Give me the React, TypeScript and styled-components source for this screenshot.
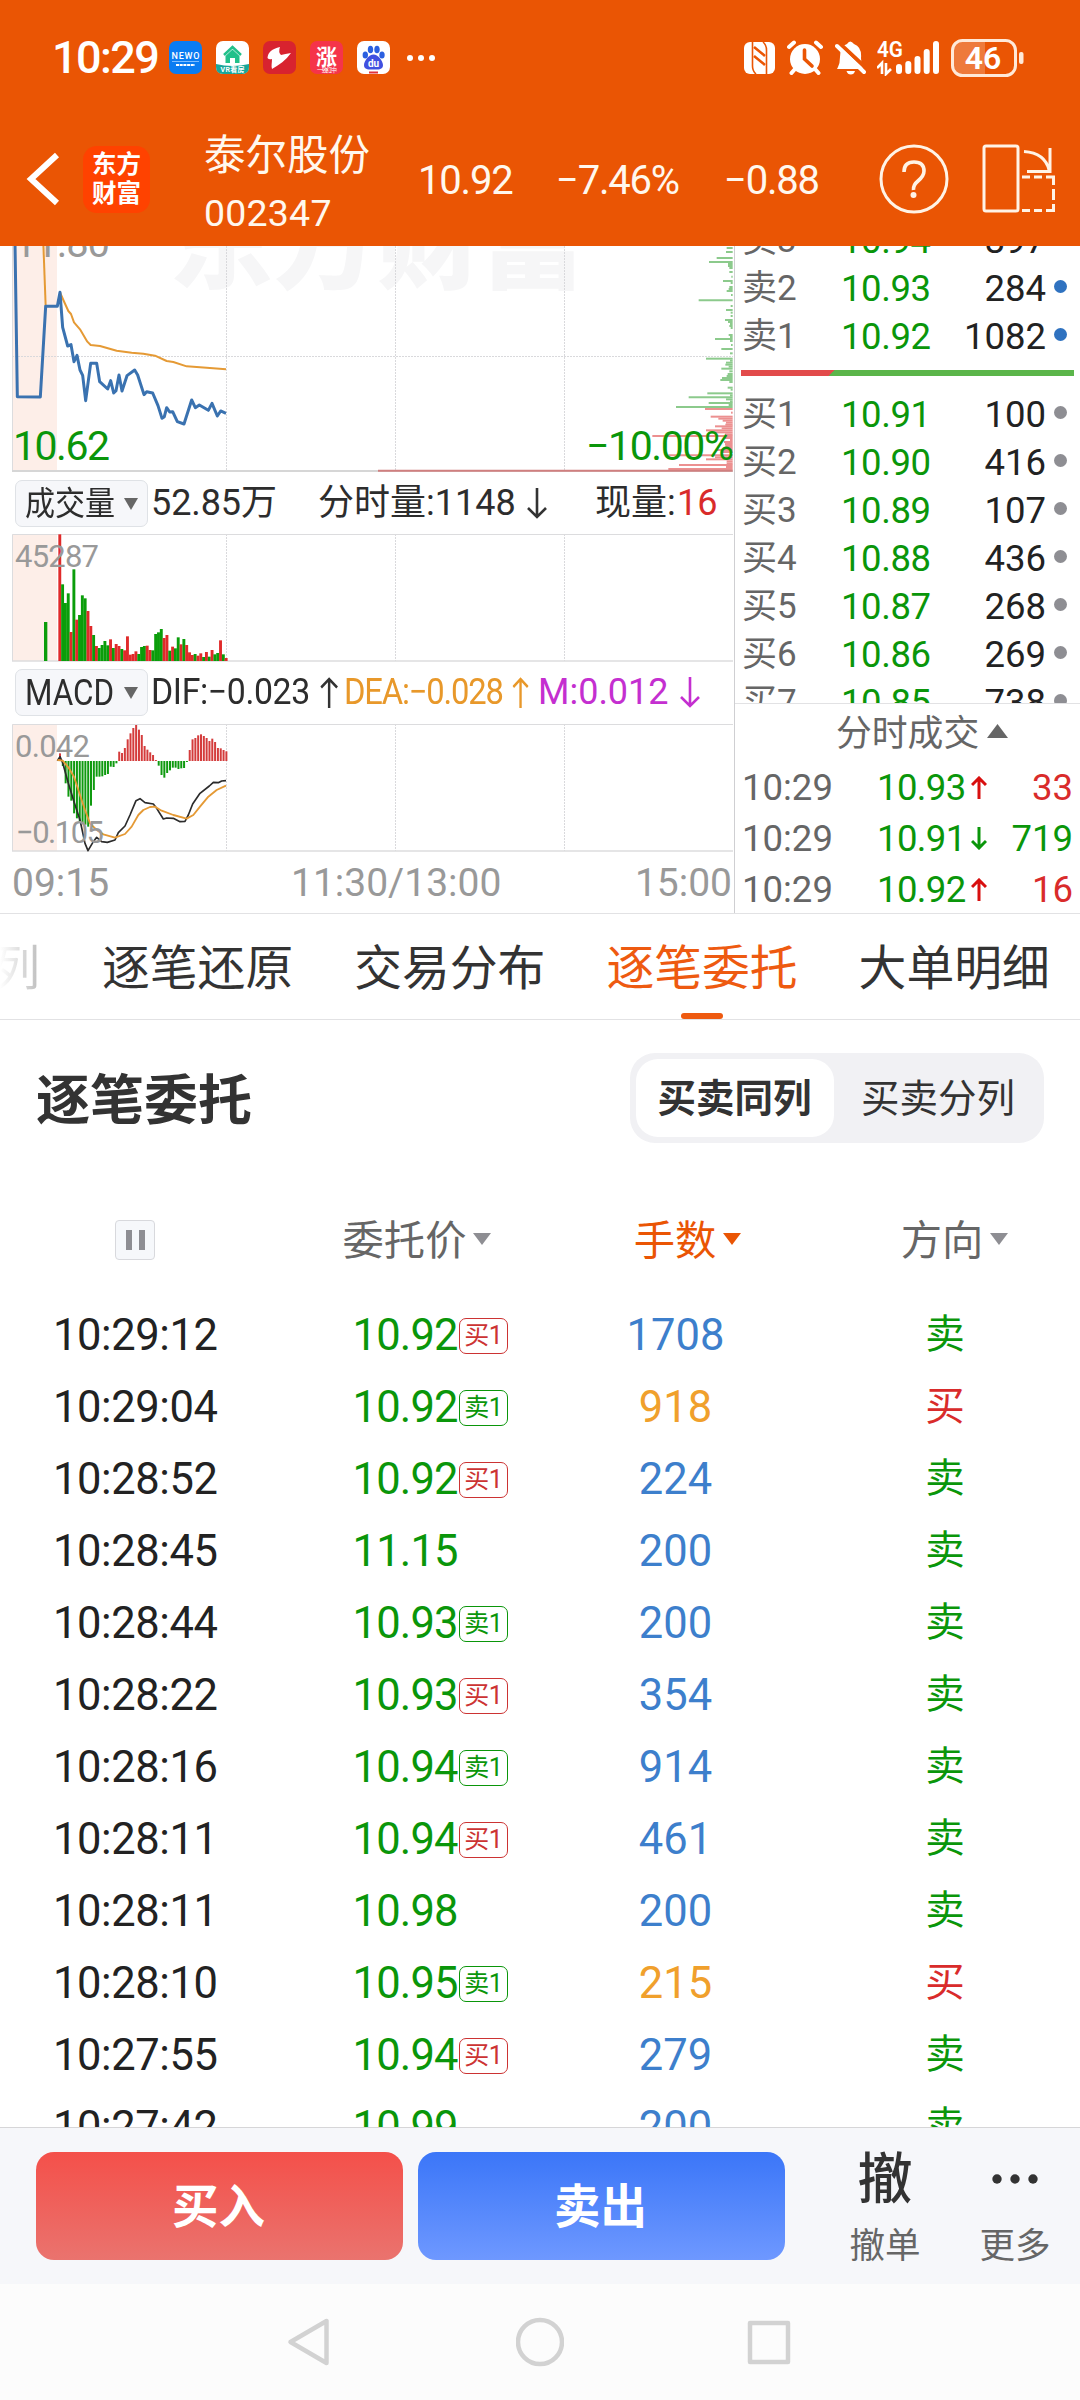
import React from "react";
import styled, { createGlobalStyle } from "styled-components";

const GREEN = "#0a960a";
const RED = "#d92b2b";
const BLUE = "#3d7fcc";
const AMBER = "#f0a02c";
const ORANGE = "#ea5504";

const FONT = `Roboto, "Noto Sans CJK SC", sans-serif`;

const GlobalStyle = createGlobalStyle`
  * { box-sizing: border-box; }
  body { margin: 0; background: #fff; font-family: ${FONT}; }
  svg { display: block; flex: none; }
`;

const Screen = styled.div`
  width: 1080px;
  height: 2400px;
  display: flex;
  flex-direction: column;
  overflow: hidden;
  background: #fff;
  color: #262626;
  line-height: 1.2;
  white-space: nowrap;
`;

/* ---------- top area ---------- */

const Top = styled.header`
  height: 246px;
  flex: none;
  background: ${ORANGE};
  color: #fff8ee;
`;

const StatusBar = styled.div`
  height: 115px;
  padding: 0 55px 0 52px;
  display: flex;
  align-items: center;
`;

const Clock = styled.span`
  width: 117px;
  font-size: 45px;
  line-height: 50px;
  font-weight: 500;
  letter-spacing: -1.6px;
  color: #fff;
`;

const AppIcons = styled.div`
  display: flex;
  gap: 14px;
  align-items: center;
`;

const SystemIcons = styled.div`
  margin-left: auto;
  display: flex;
  align-items: center;
`;

const TitleBar = styled.div`
  height: 128px;
  padding: 0 20px 0 26px;
  display: flex;
  align-items: center;
`;

const Logo = styled.div`
  width: 67px;
  height: 67px;
  flex: none;
  margin-left: 22px;
  border-radius: 14px;
  background: #ff4200;
  color: #fff;
  display: flex;
  flex-direction: column;
  align-items: center;
  justify-content: center;
  font: 700 24.5px/29px ${FONT};
`;

const StockName = styled.div`
  width: 214px;
  flex: none;
  margin: 11px 0 0 54px;
  display: flex;
  flex-direction: column;
`;

const Name = styled.span`
  font-size: 41.5px;
  line-height: 56px;
`;

const Code = styled.span`
  font-size: 37.5px;
  line-height: 58px;
  letter-spacing: 0.2px;
`;

const Quote = styled.span<{ $w: number }>`
  width: ${(p) => p.$w}px;
  flex: none;
  padding-top: 3px;
  font-size: 40px;
  line-height: 56px;
  letter-spacing: -1.2px;
`;

/* ---------- market panel ---------- */

const Market = styled.section`
  height: 668px;
  flex: none;
  display: flex;
  border-bottom: 1px solid #e2e2e4;
`;

const Charts = styled.div`
  width: 734px;
  flex: none;
  display: flex;
  flex-direction: column;
`;

const IndicatorRow = styled.div`
  height: 59px;
  flex: none;
  padding-left: 15px;
  display: flex;
  align-items: center;
  font-size: 36px;
  color: #2d2d2d;
`;

const Picker = styled.div`
  width: 133px;
  height: 47px;
  margin-right: 3px;
  padding: 0 9px 0 9px;
  border: 1px solid #dfe2e6;
  border-radius: 7px;
  background: #f6f7fa;
  display: flex;
  align-items: center;
  justify-content: space-between;
`;

const PickerText = styled.span<{ $size: number; $squeeze: number }>`
  width: 88px;
  font-size: ${(p) => p.$size}px;
  line-height: 44px;
  transform: scaleX(${(p) => p.$squeeze});
  transform-origin: left;
`;

const Field = styled.span<{ $w: number; $color?: string; $track?: number; $squeeze?: number }>`
  width: ${(p) => p.$w}px;
  flex: none;
  display: flex;
  align-items: center;
  gap: 11px;
  color: ${(p) => p.$color ?? "inherit"};
  letter-spacing: ${(p) => p.$track ?? 0}px;
  transform: scaleX(${(p) => p.$squeeze ?? 1});
  transform-origin: left;
`;

const AxisRow = styled.div`
  height: 59px;
  padding: 0 2px 0 12px;
  display: flex;
  align-items: center;
  font-size: 39px;
  color: #999;
`;

const AxisStart = styled.span`
  width: 279px;
`;

const AxisEnd = styled.span`
  margin-left: auto;
`;

const Side = styled.div`
  flex: 1;
  border-left: 1px solid #cfcfd2;
  display: flex;
  flex-direction: column;
`;

const Book = styled.div`
  height: 458px;
  flex: none;
  overflow: hidden;
  border-bottom: 1px solid #e2e2e4;
`;

const BookList = styled.div`
  margin-top: -30px;
`;

const BookRow = styled.div`
  height: 48px;
  padding: 0 13px 0 7px;
  display: flex;
  align-items: center;
  font-size: 36.5px;
  line-height: 49px;
`;

const Level = styled.span`
  width: 99px;
  color: #666;
  font-size: 35px;
`;

const LevelPrice = styled.span`
  width: 104px;
  color: ${GREEN};
  letter-spacing: -0.4px;
`;

const LevelQty = styled.span`
  flex: 1;
  text-align: right;
  color: #222;
`;

const Dot = styled.i<{ $c: string }>`
  width: 13px;
  height: 13px;
  margin: -4px 0 0 8px;
  border-radius: 50%;
  background: ${(p) => p.$c};
`;

const Balance = styled.div`
  height: 6px;
  margin: 10px 6px 14px 6px;
  background: linear-gradient(135deg, #e24b4b 0 66px, #5bb54a 66.5px);
`;

const TickTitle = styled.div`
  height: 58px;
  flex: none;
  padding: 2px 0 0 101px;
  display: flex;
  align-items: center;
  gap: 8px;
  font-size: 35.8px;
  color: #666;
`;

const TickTriangle = styled.span`
  margin-top: -6px;
`;

const TickRow = styled.div`
  height: 51px;
  flex: none;
  padding: 0 7px 0 7px;
  display: flex;
  align-items: center;
  font-size: 36.5px;
`;

const TickTime = styled.span`
  width: 135px;
  color: #666;
`;

const TickPrice = styled.span`
  width: 94px;
  color: ${GREEN};
  letter-spacing: -0.6px;
`;

const TickQty = styled.span<{ $c: string }>`
  flex: 1;
  text-align: right;
  color: ${(p) => p.$c};
`;

/* ---------- tabs ---------- */

const Tabs = styled.nav`
  height: 106px;
  flex: none;
  display: flex;
  align-items: stretch;
  gap: 61px;
  border-bottom: 1px solid #e2e2e4;
  overflow: hidden;
`;

const Tab = styled.span<{ $active?: boolean }>`
  flex: none;
  display: flex;
  flex-direction: column;
  align-items: center;
  justify-content: space-between;
  padding-top: 21px;
  font-size: 47.8px;
  line-height: 68px;
  color: ${(p) => (p.$active ? "#ee5a10" : "#333")};
`;

const FadedTab = styled(Tab)`
  width: 41px;
  padding-right: 1px;
  align-items: flex-end;
  background: linear-gradient(90deg, #fff 0, #bbb 100%);
  background-clip: text;
  -webkit-background-clip: text;
  color: transparent;
`;

const Underline = styled.i`
  width: 42px;
  height: 6px;
  border-radius: 3px;
  background: #ee5a10;
`;

/* ---------- order list ---------- */

const Orders = styled.section`
  height: 1107px;
  flex: none;
  overflow: hidden;
`;

const OrdersHead = styled.div`
  height: 156px;
  padding: 0 36px;
  display: flex;
  align-items: center;
  justify-content: space-between;
`;

const Heading = styled.h2`
  margin: 8px 0 0;
  font-size: 54px;
  line-height: 70px;
  font-weight: 700;
  color: #333;
`;

const Segment = styled.div`
  width: 414px;
  height: 90px;
  margin-top: -1px;
  padding: 6px;
  border-radius: 25px;
  background: #f1f1f4;
  display: flex;
`;

const SegmentItem = styled.span<{ $on?: boolean }>`
  width: ${(p) => (p.$on ? 198 : 204)}px;
  padding: 3px ${(p) => (p.$on ? 1 : 0)}px 0 ${(p) => (p.$on ? 0 : 4)}px;
  border-radius: 22px;
  background: ${(p) => (p.$on ? "#fff" : "transparent")};
  font-size: 38.5px;
  font-weight: ${(p) => (p.$on ? 700 : 400)};
  color: #333;
  display: flex;
  align-items: center;
  justify-content: center;
`;

const Grid = styled.div`
  display: grid;
  grid-template-columns: 270px 271px 270px 269px;
  align-items: center;
`;

const HeadGrid = styled(Grid)`
  height: 124px;
  padding-top: 3px;
  font-size: 41.3px;
  color: #666;
`;

const RowGrid = styled(Grid)`
  height: 72px;
  font-size: 43.5px;
`;

const HeadCell = styled.span<{ $c?: string; $shift?: number }>`
  display: flex;
  align-items: center;
  justify-content: center;
  gap: 7px;
  padding-left: ${(p) => p.$shift ?? 0}px;
  color: ${(p) => p.$c ?? "inherit"};
`;

const HeadText = styled.span`
  padding-top: 4px;
`;

const Pause = styled.div`
  width: 40px;
  height: 40px;
  border: 1px solid #d8d9dd;
  border-radius: 4px;
  background: #f6f8fb;
  display: flex;
  gap: 7px;
  align-items: center;
  justify-content: center;
`;

const PauseBar = styled.i`
  width: 6px;
  height: 20px;
  background: #8e8e93;
`;

const Time = styled.span`
  padding-left: 53px;
  color: #222;
  letter-spacing: -0.4px;
`;

const Price = styled.span`
  padding-left: 82.5px;
  display: flex;
  align-items: center;
  color: ${GREEN};
  letter-spacing: -0.8px;
`;

const Tag = styled.span<{ $buy: boolean }>`
  width: 49px;
  height: 36px;
  margin: 0 0 0 1px;
  border: 1px solid currentColor;
  border-radius: 7px;
  display: flex;
  align-items: center;
  justify-content: center;
  font-size: 25px;
  line-height: 34px;
  letter-spacing: -0.5px;
  color: ${(p) => (p.$buy ? "#cc3333" : "#0a960a")};
`;

const Qty = styled.span<{ $big: boolean }>`
  padding-right: 1px;
  text-align: center;
  color: ${(p) => (p.$big ? AMBER : BLUE)};
`;

const Direction = styled.span<{ $buy: boolean }>`
  margin-top: -3px;
  padding-right: 1px;
  text-align: center;
  font-size: 39.5px;
  color: ${(p) => (p.$buy ? RED : GREEN)};
`;

/* ---------- bottom ---------- */

const TradeBar = styled.footer`
  height: 157px;
  flex: none;
  padding: 24px 0 0 36px;
  border-top: 1px solid #d6d6d8;
  background: #f6f7fa;
  display: flex;
  align-items: flex-start;
`;

const TradeButton = styled.button<{ $from: string; $to: string }>`
  width: 367px;
  height: 108px;
  margin: 0 15px 0 0;
  padding: 2px 2px 0 0;
  border: 0;
  border-radius: 18px;
  background: linear-gradient(${(p) => p.$from}, ${(p) => p.$to});
  color: #fff;
  font: 700 46.5px/106px ${FONT};
`;

const Action = styled.div<{ $w: number }>`
  width: ${(p) => p.$w}px;
  display: flex;
  flex-direction: column;
  align-items: center;
`;

const ActionIcon = styled.span`
  height: 62px;
  margin-top: -4px;
  display: flex;
  align-items: center;
  font-size: 55px;
  font-weight: 500;
  line-height: 62px;
  color: #333;
`;

const ActionLabel = styled.span`
  margin-top: 12px;
  font-size: 35.5px;
  line-height: 48px;
  color: #666;
`;

const NavBar = styled.div`
  height: 116px;
  flex: none;
  background: #fcfcfc;
  display: flex;
  align-items: center;
  justify-content: center;
  gap: 183px;
`;

/* ---------- drawings ---------- */

const Caret = ({ w, h, c, up }: { w: number; h: number; c: string; up?: boolean }) => (
  <svg width={w} height={h} viewBox="0 0 10 10" preserveAspectRatio="none">
    <path d={up ? "M0 10H10L5 0Z" : "M0 0H10L5 10Z"} fill={c} />
  </svg>
);

const Arrow = ({ up, c, w = 20, h = 31, s = 2.6 }: { up?: boolean; c: string; w?: number; h?: number; s?: number }) => (
  <svg width={w} height={h} fill="none" stroke={c} strokeWidth={s}>
    {up ? (
      <path d={`M${w / 2} ${h}V2M1 ${w / 2 + 1}L${w / 2} 2L${w - 1} ${w / 2 + 1}`} />
    ) : (
      <path d={`M${w / 2} 0V${h - 2}M1 ${h - w / 2 - 1}L${w / 2} ${h - 2}L${w - 1} ${h - w / 2 - 1}`} />
    )}
  </svg>
);

const StatusApps = () => (
  <AppIcons>
    <svg width="33" height="33">
      <rect width="33" height="33" rx="7" fill="#0a7cf2" />
      <text x="16.500" y="18" fontSize="9" fontWeight="500" fill="#fff" textAnchor="middle" textLength="28">NEWO</text>
      <path d="M3 20.500H30" stroke="#7dbcff" strokeWidth="1" />
      <path d="M7 24H26" stroke="#fff" strokeWidth="2.200" strokeDasharray="3 .7" />
    </svg>
    <svg width="33" height="33">
      <rect width="33" height="33" rx="7" fill="#fff" />
      <path d="M0 23Q16 27 33 23V26Q33 33 26 33H7Q0 33 0 26Z" fill="#19a79a" />
      <path d="M8 14L16.500 6L25 14" fill="none" stroke="#22c08a" strokeWidth="2.500" />
      <path d="M9.500 15L16.500 8.500L23.500 15V22H19V17H14V22H9.500Z" fill="#22c08a" />
      <text x="16.500" y="31" fontSize="7" fontWeight="700" fill="#fff" textAnchor="middle" textLength="24">VR看房</text>
    </svg>
    <svg width="33" height="33">
      <rect width="33" height="33" rx="7" fill="#d8232f" />
      <path d="M17 6C9 8 5 11 4.500 17Q6 19 9 18C9 22 8 25 9 28C16 24 23 19 28 12Q22 13 18 14Q15 11 17 6Z" fill="#fff" />
    </svg>
    <svg width="33" height="33">
      <rect width="33" height="33" rx="7" fill="#f5344a" />
      <text x="16.500" y="23" fontSize="21" fontWeight="700" fill="#fff" textAnchor="middle">涨</text>
      <text x="17" y="31" fontSize="6" fill="#fff" textAnchor="middle" textLength="20">一致红中</text>
    </svg>
    <svg width="33" height="33">
      <rect width="33" height="33" rx="7" fill="#fff" />
      <g fill="#2a5fe0">
        <ellipse cx="8.300" cy="14" rx="2.700" ry="3.500" />
        <ellipse cx="13.500" cy="8.500" rx="2.700" ry="3.800" />
        <ellipse cx="20" cy="8.500" rx="2.700" ry="3.800" />
        <ellipse cx="25" cy="14" rx="2.700" ry="3.500" />
        <path d="M16.500 13.500C21 13.500 26 20 26 24C26 29 21 28.500 16.500 28.500S7 29 7 24C7 20 12 13.500 16.500 13.500Z" fill="#4050e0" />
      </g>
      <text x="16.500" y="26" fontSize="10" fontWeight="700" fill="#fff" textAnchor="middle">du</text>
      <path d="M12 31.500H21" stroke="#e0323c" strokeWidth="2" />
    </svg>
    <svg width="34" height="8" fill="#fff">
      <circle cx="6" cy="4" r="3" />
      <circle cx="17" cy="4" r="3" />
      <circle cx="28" cy="4" r="3" />
    </svg>
  </AppIcons>
);

const StatusIcon = styled.svg<{ $gap: number }>`
  margin-left: ${(p) => p.$gap}px;
`;

const StatusIcons = () => (
  <SystemIcons>
    <StatusIcon $gap={0} width="31" height="33" viewBox="0 0 31 33">
      <rect y="1" width="31" height="32" rx="6" fill="#fff" />
      <path d="M8.500 1V25Q8.500 30 12 33M22.500 33V9Q22.500 4 19 1" fill="none" stroke={ORANGE} strokeWidth="1.600" />
      <path d="M10 6L21 15M10 15L21 24" stroke={ORANGE} strokeWidth="2.600" />
    </StatusIcon>
    <StatusIcon $gap={12} width="36" height="35" viewBox="0 0 36 35">
      <circle cx="18" cy="19" r="15" fill="#fff" />
      <path d="M2 7L7 2.500M34 7L29 2.500M8 29L4.500 33M28 29L31.500 33" stroke="#fff" strokeWidth="4" strokeLinecap="round" />
      <path d="M17.500 10V19L25 26" fill="none" stroke={ORANGE} strokeWidth="3.600" strokeLinecap="round" />
    </StatusIcon>
    <StatusIcon $gap={12} width="31" height="35" viewBox="0 0 31 35">
      <path d="M3 27Q5 23 5 17Q5 6 12 4Q15 -1 19 4Q27 7 26 18Q26 24 28 29H2Z" fill="#fff" />
      <path d="M11.500 31H20Q19 34.500 15.800 34.500T11.500 31Z" fill="#fff" />
      <path d="M3 2L31 28" stroke={ORANGE} strokeWidth="4" />
      <path d="M2 6L29 32" stroke="#fff" strokeWidth="4" strokeLinecap="round" />
    </StatusIcon>
    <StatusIcon $gap={11} width="64" height="36" viewBox="0 0 64 36">
      <text x="0" y="17" fontSize="22" fontWeight="600" fill="#fff" textLength="26" lengthAdjust="spacingAndGlyphs">4G</text>
      <path d="M0 28L5 23V34M9 23V34L14 29" fill="none" stroke="#fff" strokeWidth="2.600" />
      <g stroke="#fff" strokeWidth="6" strokeLinecap="round">
        <path d="M22 27V31M31.300 24V31M40.500 19V31M49.700 12V31M59 4V31" />
      </g>
    </StatusIcon>
    <StatusIcon $gap={10} width="74" height="38" viewBox="0 0 74 38">
      <path d="M12 1.500H34V36.500H12Q1.500 36.500 1.500 26V12Q1.500 1.500 12 1.500Z" fill="#fff" opacity=".22" />
      <rect x="1.500" y="1.500" width="63" height="35" rx="10" fill="none" stroke="#ffe9d8" strokeWidth="3" />
      <rect x="68" y="13" width="4.500" height="12" rx="2" fill="#ffe9d8" />
      <text x="32" y="30" fontSize="32" fontWeight="600" fill="#fff" textAnchor="middle">46</text>
    </StatusIcon>
  </SystemIcons>
);

const BackIcon = () => (
  <svg width="35" height="56" fill="none" stroke="#fff" strokeWidth="6">
    <path d="M31 4L5 28L31 52" />
  </svg>
);

const HelpIcon = () => (
  <svg width="70" height="70" fill="none" stroke="#fff3e6" strokeWidth="3">
    <circle cx="35" cy="35" r="33" />
    <path d="M25 28Q25 18 35 18T45 27Q45 32 39 37Q34 41 34.500 46" strokeWidth="3.600" />
    <circle cx="34.500" cy="51" r="3" fill="#fff3e6" stroke="none" />
  </svg>
);

const RotateSvg = styled.svg`
  margin-left: 32px;
`;

const RotateIcon = () => (
  <RotateSvg width="76" height="70" fill="none" stroke="#fff3e6" strokeWidth="3">
    <rect x="3" y="2" width="34" height="65" rx="2" />
    <path d="M43 7.500Q64 9 68 26M69 4V27.500H46" />
    <path d="M41 33H49M53 33H61M65 33H72.500V41M72.500 45V56M72.500 60V66.500H65M61 66.500H53M49 66.500H41" />
  </RotateSvg>
);

const AVG = "180,157 190,180 205,213 213,222 222,247 240,268 262,305 272,315 300,318 350,332 395,338 430,341 465,347 500,363 520,366 560,379 620,383 678,388";
const PRICE =
  "45,10 52,470 121,471 137,199 172,199 180,157 188,262 203,318 213,314 222,365 231,346 240,390 248,406 257,482 272,370 290,370 299,425 323,447 332,422 341,459 348,452 357,405 366,453 381,407 404,390 413,405 432,464 440,455 458,459 474,497 486,535 493,530 500,503 509,516 518,515 532,545 552,552 575,480 586,503 598,495 625,511 636,490 652,528 662,513 678,520";

// [y, left edge] of the price distribution bars
const SELL_DEPTH = [
  [24, 1100], [36, 1098], [54, 1070], [66, 1047], [72, 1104], [78, 1104], [84, 1108], [96, 1108], [110, 1114], [123, 1089], [129, 1112],
  [141, 1108], [147, 1106], [153, 1100], [165, 1113], [181, 1016], [198, 1112], [210, 1098], [218, 1112], [228, 1112], [240, 1095], [246, 1104],
  [252, 1110], [258, 1108], [264, 1112], [285, 1106], [291, 1110], [297, 1065], [303, 1110], [315, 1113], [327, 1084], [340, 1110], [356, 1038],
  [362, 1110], [368, 1098], [374, 1096], [380, 1106], [386, 1084], [394, 1108], [402, 1103], [408, 1100], [414, 1086], [420, 1081], [426, 1108],
  [443, 1103], [449, 1112], [460, 1042], [466, 1110], [472, 986], [478, 1098], [484, 1110], [489, 1046], [495, 1106], [501, 948],
];
const BUY_DEPTH = [
  [507, 1035], [518, 1113], [530, 1052], [536, 1075], [542, 1088], [548, 1098], [554, 1096], [559, 1065], [565, 1085], [571, 1038], [577, 1060],
  [583, 1095], [588, 877], [594, 1095], [600, 1110], [606, 1092], [612, 1095], [618, 1096], [624, 1090], [630, 1070], [636, 1085], [646, 925],
  [652, 1065], [658, 1038], [664, 1100], [670, 1100], [675, 957], [681, 1098], [687, 925],
];

const GRID_X = [226, 395, 564];

const GridLines = ({ top, bottom }: { top: number; bottom: number }) => (
  <g stroke="#d9d9dc" strokeWidth="1">
    {GRID_X.map((x) => (
      <path key={x} d={`M${x + 0.5} ${top}V${bottom}`} strokeDasharray="2 1" />
    ))}
  </g>
);

const PriceChart = () => (
  <svg width="734" height="228" viewBox="0 246 734 228">
    <text x="169" y="281" fontSize="104" fontWeight="900" fill="#f6f6f7">东方财富</text>
    <rect x="12" y="246" width="45" height="225" fill="#fdeee8" />
    <GridLines top={246} bottom={470} />
    <path d="M12 356.500H733" stroke="#d9d9dc" strokeDasharray="2 1" />
    <path d="M12.500 246V471" stroke="#dcdcde" />
    <path d="M12 471H733" stroke="#d6d6d6" strokeWidth="2" />
    <text x="14" y="257" fontSize="40" fill="#999" textLength="96">11.80</text>
    <g transform="translate(360 240) scale(.33333)" strokeWidth="6">
      {SELL_DEPTH.map(([y, x]) => (
        <path key={y} d={`M${x} ${y}H1118`} stroke="#8cca8c" />
      ))}
      {BUY_DEPTH.map(([y, x]) => (
        <path key={y} d={`M${x} ${y}H1118`} stroke="#ec9090" />
      ))}
      <path d="M54 692H1118" stroke="#d07f7f" />
    </g>
    <g transform="translate(0 240) scale(.33333)" fill="none" strokeLinejoin="round">
      <polyline points="130,10 137,199" stroke="#e59a35" strokeWidth="6" />
      <polyline points={AVG} stroke="#e59a35" strokeWidth="6" />
      <polyline points={PRICE} stroke="#3a72b0" strokeWidth="9" />
    </g>
    <text x="13" y="460" fontSize="41" fill={GREEN} textLength="97">10.62</text>
    <text x="586" y="460" fontSize="41" fill={GREEN} textLength="148">−10.00%</text>
  </svg>
);

const VOLUME =
  "R43 G193 G249 G220 R336 G148 R299 G285 G226 G235 R273 R318 G345 R378 G384 G375 G363 G376 R358 G384 R372 R378 G387 R391 R349 R404 R402 R394 G402 G381 G378 R377 R390 G391 G342 G337 G327 R354 R345 G392 R380 G385 G352 R373 G357 R375 R397 R405 G402 R407 R400 G411 R396 G410 R390 G403 G399 R361 G403 R414".split(" ");

const VolumeChart = () => (
  <svg width="734" height="130" viewBox="0 533 734 130">
    <rect x="12" y="534" width="45" height="127" fill="#fdeee8" />
    <GridLines top={534} bottom={661} />
    <path d="M733 534.500H12.500V661" fill="none" stroke="#dcdcde" />
    <path d="M12 661H733" stroke="#dcdcde" strokeWidth="1.500" />
    <g transform="translate(0 520) scale(.33333)">
      <rect x="132" y="306" width="10" height="117" fill="#0a9d0a" />
      {VOLUME.map((v, i) => {
        const y = Number(v.slice(1));
        return <rect key={i} x={175 + i * 8.46} y={y} width="8.700" height={423 - y} fill={v[0] === "R" ? "#e02a2a" : "#0a9d0a"} />;
      })}
    </g>
    <text x="15" y="567" fontSize="31" fill="#999" textLength="84">45287</text>
  </svg>
);

const MACD_BARS = [
  700, 738, 790, 830, 842, 880, 895, 905, 908, 914, 920, 857, 810, 770, 770, 769, 765, 762, 740, 741, 730, 695, 699, 684, 658, 640, 624, 615, 629, 645, 678,
  689, 697, 705, 720, 737, 765, 773, 759, 751, 743, 743, 747, 745, 744, 726, 690, 658, 654, 646, 643, 648, 654, 663, 656, 666, 684, 685, 690, 694,
];
const DIF =
  "172,722 180,710 188,728 205,790 222,845 240,900 255,970 264,992 280,965 290,952 305,965 322,967 345,960 355,938 375,918 390,885 408,842 420,836 435,848 460,852 470,865 490,897 500,894 520,895 540,905 555,904 565,885 578,852 600,820 628,798 640,787 655,788 665,783 678,782";
const DEA =
  "172,720 188,722 205,742 222,770 240,825 255,870 270,910 290,930 310,943 345,953 375,942 395,920 415,885 430,870 450,861 465,860 485,872 520,885 560,896 580,885 600,860 625,830 650,810 678,797";

const MacdChart = () => (
  <svg width="734" height="132" viewBox="0 722 734 132">
    <rect x="12" y="724" width="45" height="127" fill="#fdeee8" />
    <GridLines top={724} bottom={851} />
    <path d="M733 724.500H12.500V851" fill="none" stroke="#dcdcde" />
    <path d="M12 851H733" stroke="#dcdcde" strokeWidth="1.500" />
    <g transform="translate(0 520) scale(.33333)" fill="none" strokeLinejoin="round">
      {MACD_BARS.map((y, i) => (
        <path key={i} d={`M${180 + i * 8.46} 723V${y}`} strokeWidth="6" stroke={y < 723 ? "#d43c3c" : "#0f9a0f"} />
      ))}
      <polyline points={DIF} stroke="#2b2b2b" strokeWidth="5" />
      <polyline points={DEA} stroke="#e59a35" strokeWidth="5.500" />
    </g>
    <text x="15" y="757" fontSize="31" fill="#999" textLength="75">0.042</text>
    <text x="16" y="843" fontSize="31" fill="#999" textLength="88">−0.105</text>
  </svg>
);

/* ---------- data ---------- */

const SELLS: [string, string, string][] = [
  ["卖3", "10.94", "897"],
  ["卖2", "10.93", "284"],
  ["卖1", "10.92", "1082"],
];
const BUYS: [string, string, string][] = [
  ["买1", "10.91", "100"],
  ["买2", "10.90", "416"],
  ["买3", "10.89", "107"],
  ["买4", "10.88", "436"],
  ["买5", "10.87", "268"],
  ["买6", "10.86", "269"],
  ["买7", "10.85", "738"],
];
const TICKS: [string, string, boolean, string][] = [
  ["10:29", "10.93", true, "33"],
  ["10:29", "10.91", false, "719"],
  ["10:29", "10.92", true, "16"],
];
const ORDERS: [string, string, string, string, string][] = [
  ["10:29:12", "10.92", "买1", "1708", "卖"],
  ["10:29:04", "10.92", "卖1", "918", "买"],
  ["10:28:52", "10.92", "买1", "224", "卖"],
  ["10:28:45", "11.15", "", "200", "卖"],
  ["10:28:44", "10.93", "卖1", "200", "卖"],
  ["10:28:22", "10.93", "买1", "354", "卖"],
  ["10:28:16", "10.94", "卖1", "914", "卖"],
  ["10:28:11", "10.94", "买1", "461", "卖"],
  ["10:28:11", "10.98", "", "200", "卖"],
  ["10:28:10", "10.95", "卖1", "215", "买"],
  ["10:27:55", "10.94", "买1", "279", "卖"],
  ["10:27:42", "10.99", "", "200", "卖"],
];

const Depth = ({ rows, dot }: { rows: [string, string, string][]; dot: string }) => (
  <>
    {rows.map(([level, price, qty]) => (
      <BookRow key={level}>
        <Level>{level}</Level>
        <LevelPrice>{price}</LevelPrice>
        <LevelQty>{qty}</LevelQty>
        <Dot $c={dot} />
      </BookRow>
    ))}
  </>
);

export default function App() {
  return (
    <Screen>
      <GlobalStyle />
      <Top>
        <StatusBar>
          <Clock>10:29</Clock>
          <StatusApps />
          <StatusIcons />
        </StatusBar>
        <TitleBar>
          <BackIcon />
          <Logo>
            <span>东方</span>
            <span>财富</span>
          </Logo>
          <StockName>
            <Name>泰尔股份</Name>
            <Code>002347</Code>
          </StockName>
          <Quote $w={138}>10.92</Quote>
          <Quote $w={168}>−7.46%</Quote>
          <Quote $w={155}>−0.88</Quote>
          <HelpIcon />
          <RotateIcon />
        </TitleBar>
      </Top>

      <Market>
        <Charts>
          <PriceChart />
          <IndicatorRow>
            <Picker>
              <PickerText $size={33} $squeeze={0.91}>成交量</PickerText>
              <Caret w={14} h={12} c="#666" />
            </Picker>
            <Field $w={167} $track={-0.1}>52.85万</Field>
            <Field $w={277}>
              分时量:1148
              <Arrow c="#333" />
            </Field>
            <Field $w={82}>现量:</Field>
            <Field $w={50} $color={RED}>16</Field>
          </IndicatorRow>
          <VolumeChart />
          <IndicatorRow>
            <Picker>
              <PickerText $size={37} $squeeze={0.85}>MACD</PickerText>
              <Caret w={14} h={12} c="#666" />
            </Picker>
            <Field $w={193} $track={-0.4} $squeeze={0.94}>
              DIF:−0.023
              <Arrow up c="#333" w={19} />
            </Field>
            <Field $w={194} $track={-1.3} $squeeze={0.91} $color="#e8982a">
              DEA:−0.028
              <Arrow up c="#e8982a" w={18} />
            </Field>
            <Field $w={170} $color="#c42fd0">
              M:0.012
              <Arrow c="#c42fd0" />
            </Field>
          </IndicatorRow>
          <MacdChart />
          <AxisRow>
            <AxisStart>09:15</AxisStart>
            <span>11:30/13:00</span>
            <AxisEnd>15:00</AxisEnd>
          </AxisRow>
        </Charts>
        <Side>
          <Book>
            <BookList>
              <Depth rows={SELLS} dot="#2f72c0" />
              <Balance />
              <Depth rows={BUYS} dot="#8e8e93" />
            </BookList>
          </Book>
          <TickTitle>
            分时成交
            <TickTriangle>
              <Caret w={21} h={14} c="#666" up />
            </TickTriangle>
          </TickTitle>
          {TICKS.map(([time, price, up, qty]) => (
            <TickRow key={price}>
              <TickTime>{time}</TickTime>
              <TickPrice>{price}</TickPrice>
              <Arrow up={up} c={up ? "#d80f0f" : GREEN} w={16} h={23} s={3} />
              <TickQty $c={up ? RED : GREEN}>{qty}</TickQty>
            </TickRow>
          ))}
        </Side>
      </Market>

      <Tabs>
        <FadedTab>列</FadedTab>
        <Tab>逐笔还原</Tab>
        <Tab>交易分布</Tab>
        <Tab $active>
          逐笔委托
          <Underline />
        </Tab>
        <Tab>大单明细</Tab>
      </Tabs>

      <Orders>
        <OrdersHead>
          <Heading>逐笔委托</Heading>
          <Segment>
            <SegmentItem $on>买卖同列</SegmentItem>
            <SegmentItem>买卖分列</SegmentItem>
          </Segment>
        </OrdersHead>
        <HeadGrid>
          <HeadCell>
            <Pause>
              <PauseBar />
              <PauseBar />
            </Pause>
          </HeadCell>
          <HeadCell $shift={23}>
            <HeadText>委托价</HeadText>
            <Caret w={18} h={12} c="#8e8e93" />
          </HeadCell>
          <HeadCell $shift={23} $c={ORANGE}>
            <HeadText>手数</HeadText>
            <Caret w={18} h={12} c={ORANGE} />
          </HeadCell>
          <HeadCell $shift={18}>
            <HeadText>方向</HeadText>
            <Caret w={18} h={12} c="#8e8e93" />
          </HeadCell>
        </HeadGrid>
        {ORDERS.map(([time, price, tag, qty, side], i) => (
          <RowGrid key={i}>
            <Time>{time}</Time>
            <Price>
              {price}
              {tag && <Tag $buy={tag[0] === "买"}>{tag}</Tag>}
            </Price>
            <Qty $big={side === "买"}>{qty}</Qty>
            <Direction $buy={side === "买"}>{side}</Direction>
          </RowGrid>
        ))}
      </Orders>

      <TradeBar>
        <TradeButton $from="#f4504a" $to="#ea736e">买入</TradeButton>
        <TradeButton $from="#3b76f8" $to="#6e98ff">卖出</TradeButton>
        <Action $w={170}>
          <ActionIcon>撤</ActionIcon>
          <ActionLabel>撤单</ActionLabel>
        </Action>
        <Action $w={90}>
          <ActionIcon>
            <svg width="48" height="10" fill="#333">
              <circle cx="6" cy="5" r="4.700" />
              <circle cx="24" cy="5" r="4.700" />
              <circle cx="42" cy="5" r="4.700" />
            </svg>
          </ActionIcon>
          <ActionLabel>更多</ActionLabel>
        </Action>
      </TradeBar>
      <NavBar>
        <svg width="46" height="50" fill="none" stroke="#d2d2d2" strokeWidth="4.500" strokeLinejoin="round">
          <path d="M3.500 25L39.500 4V46Z" />
        </svg>
        <svg width="48" height="50" fill="none" stroke="#d2d2d2" strokeWidth="4.500">
          <circle cx="24" cy="25" r="22" />
        </svg>
        <svg width="46" height="50" fill="none" stroke="#d2d2d2" strokeWidth="4.500" strokeLinejoin="round">
          <rect x="3" y="6" width="38" height="39" />
        </svg>
      </NavBar>
    </Screen>
  );
}
